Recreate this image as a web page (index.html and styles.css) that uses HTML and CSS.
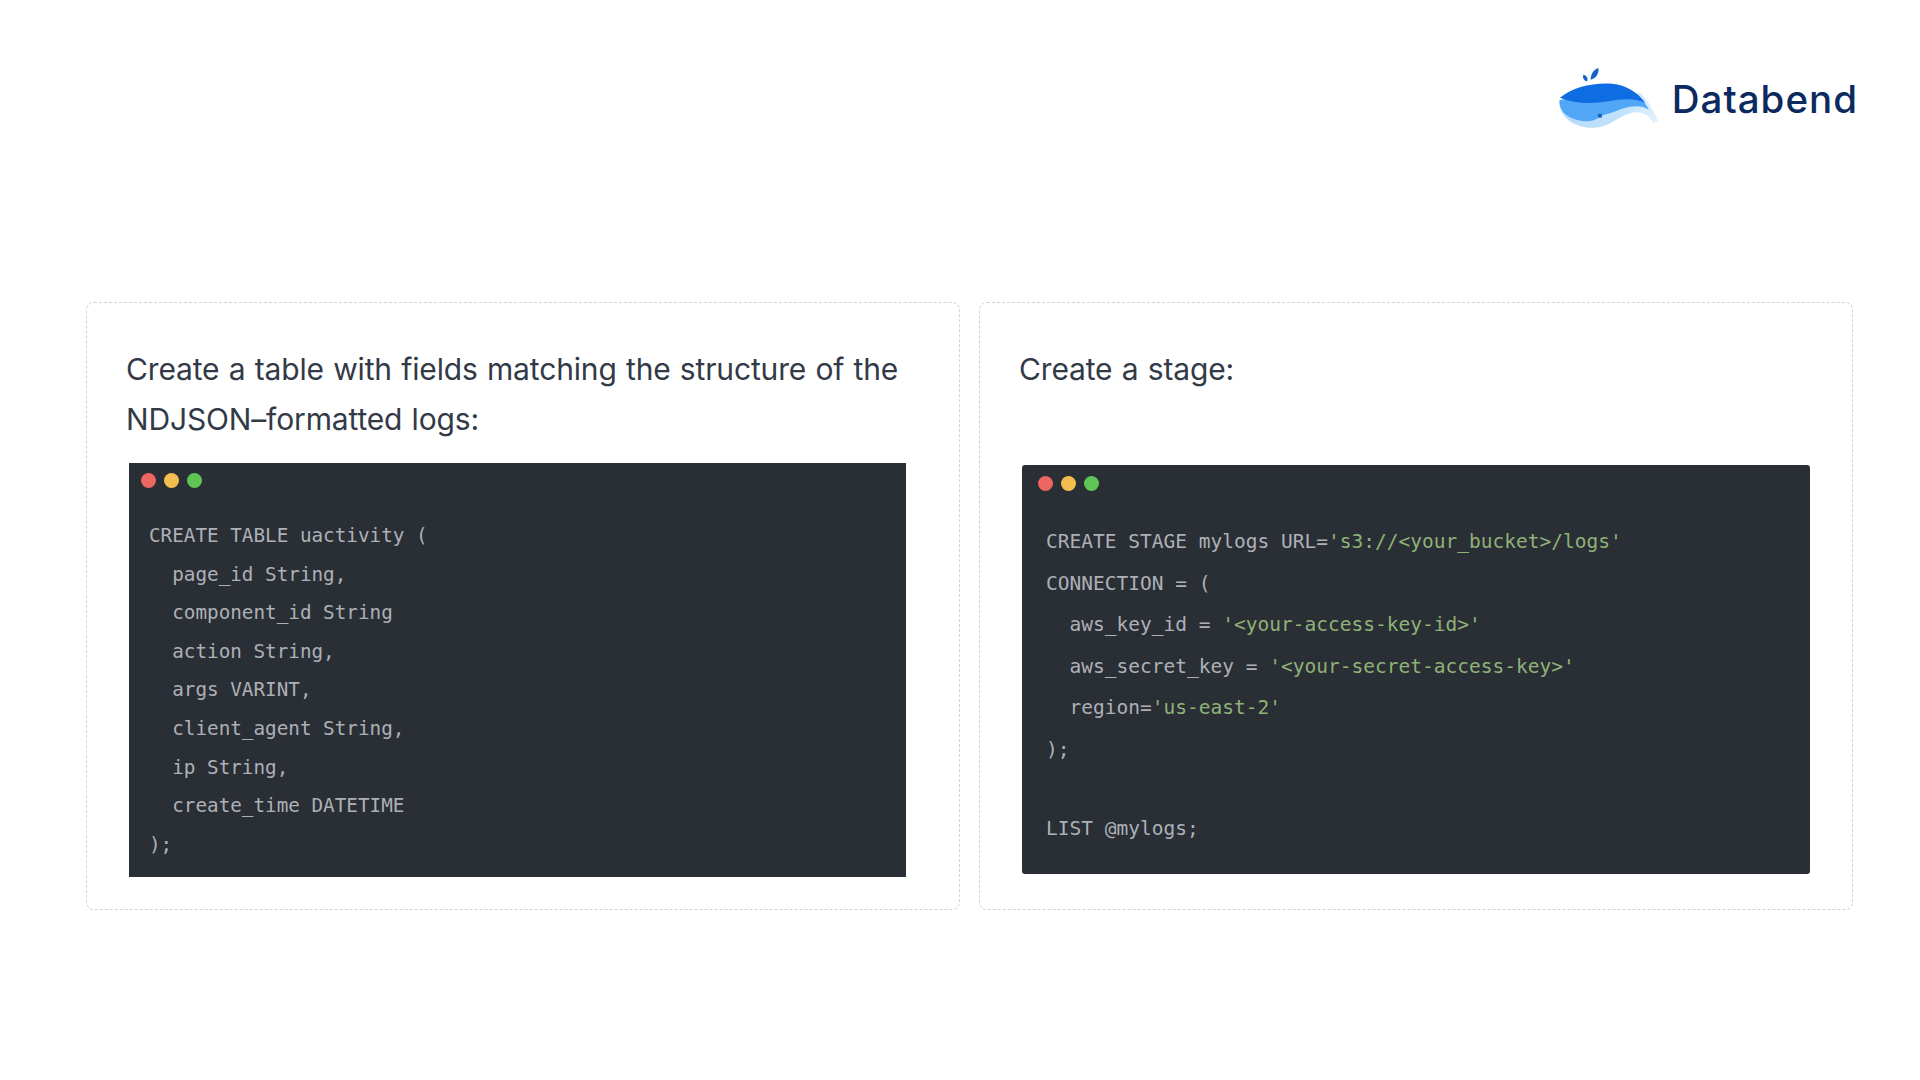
FILE: index.html
```html
<!DOCTYPE html>
<html lang="en">
<head>
<meta charset="utf-8">
<title>Databend</title>
<link rel="stylesheet" href="styles.css">
</head>
<body>
<div class="slide">
  <header class="brand">
    <svg class="whale" viewBox="0 0 360 225" aria-hidden="true">
      <defs>
        <linearGradient id="belly" x1="0" x2="1" y1="0" y2="0">
          <stop offset="0" stop-color="#b4dbfb"/>
          <stop offset="0.7" stop-color="#c4e3fb"/>
          <stop offset="1" stop-color="#e3f2fd"/>
        </linearGradient>
      </defs>
      <path fill="#1563c4" d="M111 61c-9-3-14-10-11-20 9 1 16 11 11 20zM122 56c0-15 8-30 23-35 3 16-6 30-23 35z"/>
      <path fill="url(#belly)" d="M28 125C30 168 72 201 130 200c52-1 74-36 116-45 24-5 46 3 58 22l5 8 16-5c-12-28-30-62-55-85z"/>
      <path fill="#52a6f6" d="M28 118c-1 32 22 52 57 60 28 6 52 2 68-14 30-6 58-22 88-27 20-3 40-2 56 10-8-16-20-30-32-42-60-14-150-10-237 13z"/>
      <path fill="#0e6de2" d="M30 110C68 78 130 64 186 68c44 4 78 26 100 58-32-16-70-12-112-5-50 8-98 8-144-11z"/>
      <circle cx="150" cy="164" r="6.5" fill="#1a62b8"/>
    </svg>
    <span class="brand-name">Databend</span>
  </header>
  <main class="cards">
    <section class="card">
      <h2 class="card-title">Create a table with fields matching the structure of the NDJSON–formatted logs:</h2>
      <div class="term term-left">
        <div class="dots"><i class="dot red"></i><i class="dot yellow"></i><i class="dot green"></i></div>
<pre class="code">CREATE TABLE uactivity (
  page_id String,
  component_id String
  action String,
  args VARINT,
  client_agent String,
  ip String,
  create_time DATETIME
);</pre>
      </div>
    </section>
    <section class="card">
      <h2 class="card-title">Create a stage:</h2>
      <div class="term term-right">
        <div class="dots"><i class="dot red"></i><i class="dot yellow"></i><i class="dot green"></i></div>
<pre class="code">CREATE STAGE mylogs URL=<span class="str">'s3://&lt;your_bucket&gt;/logs'</span>
CONNECTION = (
  aws_key_id = <span class="str">'&lt;your-access-key-id&gt;'</span>
  aws_secret_key = <span class="str">'&lt;your-secret-access-key&gt;'</span>
  region=<span class="str">'us-east-2'</span>
);</pre>
<pre class="code code-tail">LIST @mylogs;</pre>
      </div>
    </section>
  </main>
</div>
</body>
</html>
```
FILE: styles.css
```css
* { box-sizing: border-box; }
html, body { margin: 0; padding: 0; background: #fff; }
.slide {
  width: 1920px;
  height: 1080px;
  overflow: hidden;
  padding: 60px 62px 0 86px;
}
.brand {
  display: flex;
  justify-content: flex-end;
  align-items: center;
  height: 76px;
}
.whale { width: 120px; height: 75px; flex: none; margin-right: 2px; }
.brand-name {
  font-family: "Inter", sans-serif;
  font-size: 38.5px;
  font-weight: 500;
  color: #0b2a5e;
  letter-spacing: 1px;
  margin-top: 1px;
}
.cards {
  display: grid;
  grid-template-columns: 874px 874px;
  gap: 19px;
  margin-top: 166px;
  height: 608px;
  width: 1767px;
}
.card {
  border: 1px dashed #d0d2d6;
  border-radius: 8px;
  padding: 41px 42px 0 39px;
}
.card-title {
  margin: 0;
  height: 100px;
  font-family: "Inter", sans-serif;
  font-size: 30px;
  font-weight: 400;
  line-height: 50px;
  letter-spacing: -0.15px;
  word-spacing: 1px;
  color: #333a47;
}
.term { background: #2a2e35; color: #adb1b7; }
.term-left { margin: 19px 0 0 3px; width: 777px; height: 414px; padding: 10px 0 0 20px; }
.term-right { margin: 21px 0 0 3px; width: 788px; height: 409px; padding: 11px 0 0 24px; border-radius: 3px; }
.dots { display: flex; gap: 8px; height: 15px; margin-left: -8px; }
.dot { width: 15px; height: 15px; border-radius: 50%; display: block; }
.red { background: #ec675f; }
.yellow { background: #f3bd4f; }
.green { background: #5fc655; }
.code {
  margin: 0;
  font-family: "DejaVu Sans Mono", monospace;
  font-size: 19.3px;
}
.term-left .code { line-height: 38.6px; margin-top: 29px; }
.term-right .code { line-height: 41.6px; margin-top: 30px; font-size: 19.52px; }
.term-right .code-tail { margin-top: 37px; }
.str { color: #8fb277; }
```
